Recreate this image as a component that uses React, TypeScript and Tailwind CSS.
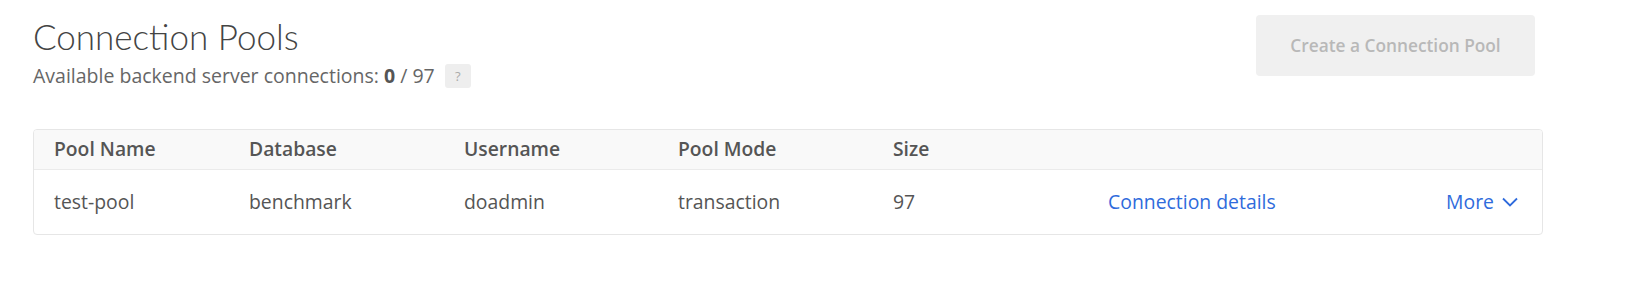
import React from "react";

const lato = { fontFamily: "Lato, 'Open Sans', sans-serif" };
const open = { fontFamily: "'Open Sans', Lato, sans-serif" };

export default function App() {
  const cols = "grid grid-cols-[195px_215px_214px_215px_215px_1fr_auto] items-center";
  return (
    <div className="w-[1636px] h-[298px] bg-white text-[#4a4a4a]" style={open}>
      <div className="flex items-start justify-between pl-[33px] pr-[101px] pt-[15px]">
        <div>
          <h1 className="text-[35px] font-light leading-none mt-[4px] text-[#444]" style={lato}>Connection Pools</h1>
          <div className="flex items-center h-[26px] mt-[9px] text-[19.5px] leading-none text-[#666]">
            <span>
              Available backend server connections: <b className="font-bold text-[#555]">0</b> / 97
            </span>
            <span className="ml-[10px] w-[26px] h-[24px] rounded-[3px] bg-[#eeeeee] text-[#aaa] text-[13px] flex items-center justify-center">?</span>
          </div>
        </div>
        <button className="w-[279px] h-[61px] rounded-[4px] bg-[#f0f0f0] text-[#b8b8b8] text-[17.3px] font-semibold">
          Create a Connection Pool
        </button>
      </div>
      <div className="mx-[33px] mt-[40px] w-[1510px] border border-[#e6e6e6] rounded-[4px] overflow-hidden">
        <div className={`${cols} h-[40px] bg-[#f9f9f9] border-b border-[#ebebeb] pl-[20px] text-[19.3px] font-semibold text-[#555]`}>
          <div>Pool Name</div>
          <div>Database</div>
          <div>Username</div>
          <div>Pool Mode</div>
          <div>Size</div>
          <div></div>
          <div></div>
        </div>
        <div className={`${cols} h-[64px] pl-[20px] text-[19.4px] text-[#555]`}>
          <div>test-pool</div>
          <div>benchmark</div>
          <div>doadmin</div>
          <div>transaction</div>
          <div>97</div>
          <div className="text-[#2f6bdc]">Connection details</div>
          <div className="flex items-center gap-[8px] pr-[24px] text-[#2f6bdc]">
            More
            <svg width="16" height="10" viewBox="0 0 16 10" fill="none">
              <path d="M1 1.5l7 7 7-7" stroke="#2f6bdc" strokeWidth="1.8" />
            </svg>
          </div>
        </div>
      </div>
    </div>
  );
}
